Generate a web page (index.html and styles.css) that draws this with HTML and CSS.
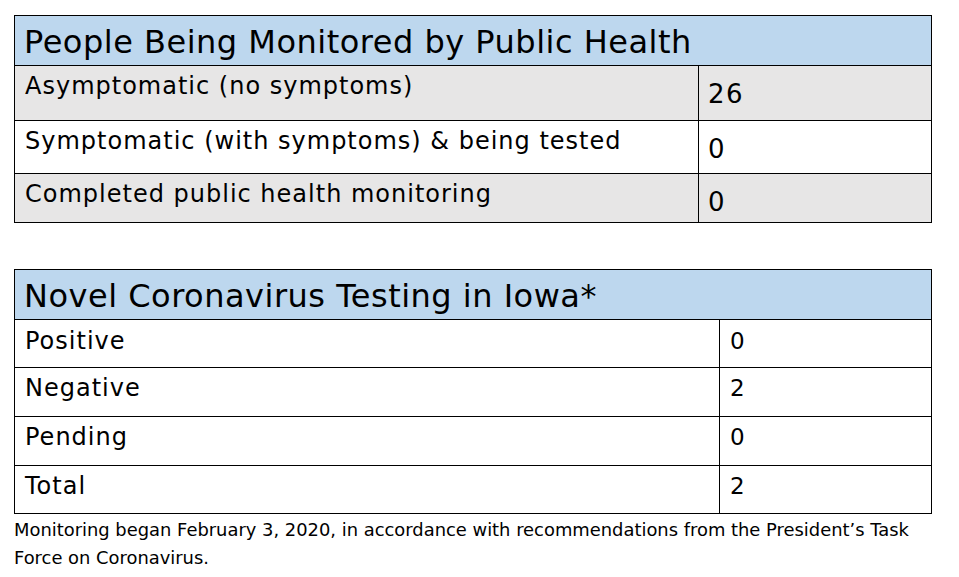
FILE: index.html
```html
<!DOCTYPE html>
<html lang="en">
<head>
<meta charset="utf-8">
<title>Iowa Novel Coronavirus Monitoring</title>
<link rel="stylesheet" href="styles.css">
</head>
<body>
<main class="page">
  <section class="tbl tbl-monitor">
    <div class="cell head">People Being Monitored by Public Health</div>
    <div class="cell label shade">Asymptomatic (no symptoms)</div>
    <div class="cell num big shade">26</div>
    <div class="cell label">Symptomatic (with symptoms) &amp; being tested</div>
    <div class="cell num big">0</div>
    <div class="cell label shade">Completed public health monitoring</div>
    <div class="cell num big shade">0</div>
  </section>

  <section class="tbl tbl-testing">
    <div class="cell head">Novel Coronavirus Testing in Iowa*</div>
    <div class="cell label first">Positive</div>
    <div class="cell num first">0</div>
    <div class="cell label">Negative</div>
    <div class="cell num">2</div>
    <div class="cell label">Pending</div>
    <div class="cell num">0</div>
    <div class="cell label">Total</div>
    <div class="cell num">2</div>
  </section>

  <p class="note">Monitoring began February 3, 2020, in accordance with recommendations from the President’s Task Force on Coronavirus.</p>
</main>
</body>
</html>
```

FILE: styles.css
```css
html, body {
  margin: 0;
  padding: 0;
  background: #ffffff;
}

.page {
  padding: 15px 0 0 14px;
  font-family: "DejaVu Sans", "Open Sans", sans-serif;
  color: #000000;
}

.tbl {
  display: grid;
  width: 918px;
  box-sizing: border-box;
  border-top: 1px solid #000;
  border-left: 1px solid #000;
}

.tbl-monitor {
  grid-template-columns: 684px 233px;
  grid-template-rows: 50px 55px 53px 49px;
}

.tbl-testing {
  margin-top: 46px;
  grid-template-columns: 705px 212px;
  grid-template-rows: 50px 48px 49px 49px 48px;
}

.cell {
  border-right: 1px solid #000;
  border-bottom: 1px solid #000;
  padding: 0 10px;
  white-space: nowrap;
}

.head {
  grid-column: 1 / 3;
  background: #bdd7ee;
  font-size: 32px;
  line-height: 40px;
  letter-spacing: 0.5px;
  padding-top: 6px;
  padding-left: 9px;
}

.label {
  font-size: 24px;
  line-height: 30px;
  letter-spacing: 1px;
  padding-top: 5px;
}

.num {
  font-size: 23px;
  line-height: 30px;
  padding-top: 5px;
}

.num.big {
  font-size: 26px;
  line-height: 32px;
  letter-spacing: 1.5px;
  padding-top: 12px;
  padding-left: 9px;
}

.tbl-testing .first {
  padding-top: 6px;
}

.shade {
  background: #e7e6e6;
}

.note {
  margin: 2px 0 0;
  width: 918px;
  font-size: 17.9px;
  line-height: 28px;
}
```
